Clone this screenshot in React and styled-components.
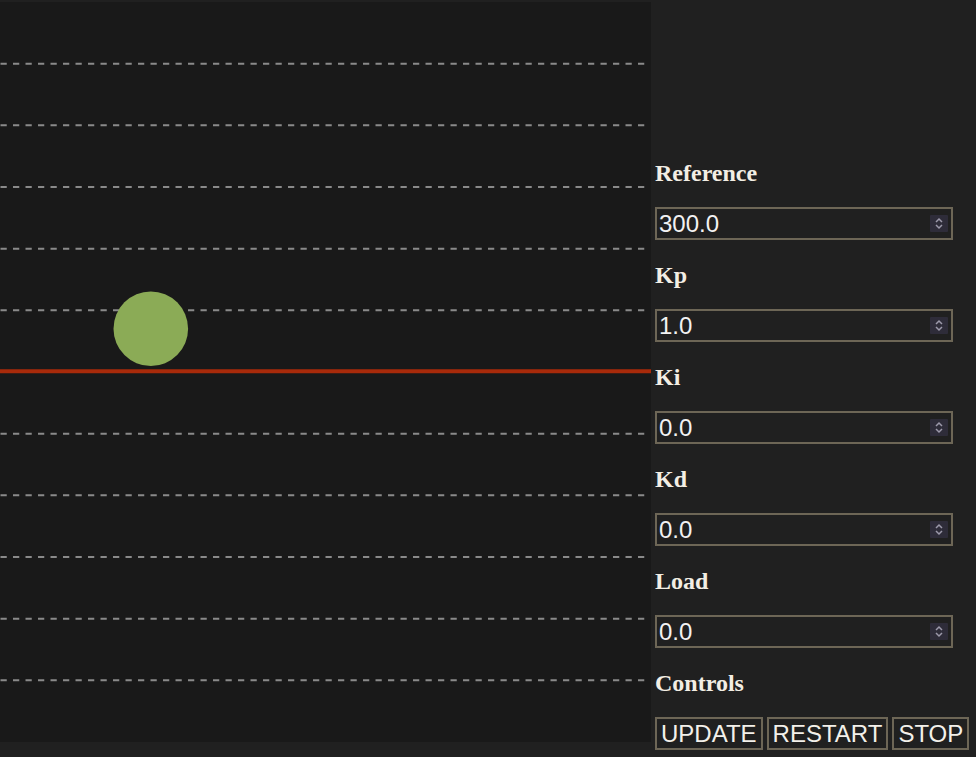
import styled, { createGlobalStyle } from "styled-components";

const Global = createGlobalStyle`
    html, body {
        margin: 0;
        background: #202020;
        overflow: hidden;
    }
`;

const Page = styled.div`
    display: flex;
    align-items: flex-start;
    gap: 4px;
    padding-top: 2px;
    height: 755px;
`;

const Board = styled.div`
    width: 651px;
    height: 740px;
    background: #191919;
    flex-shrink: 0;
    svg {
        display: block;
    }
`;

const Panel = styled.div`
    display: flex;
    flex-direction: column;
    align-items: flex-start;
    padding-top: 157px;
`;

const Label = styled.div`
    font-family: "Liberation Serif", "Times New Roman", serif;
    font-weight: bold;
    font-size: 24px;
    line-height: 28px;
    color: #f3eee4;
    margin-bottom: 20px;
`;

const Field = styled.div`
    display: flex;
    align-items: center;
    box-sizing: border-box;
    width: 298px;
    height: 33px;
    border: 2px solid #6d6656;
    margin-bottom: 21px;
    padding: 0 3px 0 2px;
    input {
        flex: 1;
        min-width: 0;
        background: transparent;
        border: none;
        outline: none;
        padding: 0;
        font-family: "Liberation Sans", Arial, sans-serif;
        font-size: 24px;
        color: #f2f2f2;
    }
`;

const Spin = styled.div`
    width: 18px;
    height: 17px;
    background: #2e2c39;
    border-radius: 1px;
    display: flex;
    align-items: center;
    justify-content: center;
`;

const Buttons = styled.div`
    display: flex;
    gap: 4px;
`;

const Button = styled.button`
    box-sizing: border-box;
    height: 33px;
    padding: 0 4px;
    background: transparent;
    border: 2px solid #6d6656;
    font-family: "Liberation Sans", Arial, sans-serif;
    font-size: 24px;
    color: #f3f0ea;
`;

function NumberField({ value }) {
    return (
        <Field>
            <input type="text" defaultValue={value} />
            <Spin>
                <svg width="10" height="13" viewBox="0 0 10 13" fill="none" stroke="#9c99aa" strokeWidth="1.5">
                    <path d="M2 5 L5 2 L8 5" />
                    <path d="M2 8 L5 11 L8 8" />
                </svg>
            </Spin>
        </Field>
    );
}

const params = [
    ["Reference", "300.0"],
    ["Kp", "1.0"],
    ["Ki", "0.0"],
    ["Kd", "0.0"],
    ["Load", "0.0"],
];

export default function App() {
    const step = 740 / 12;
    const rows = [1, 2, 3, 4, 5, 7, 8, 9, 10, 11];
    return (
        <Page>
            <Global />
            <Board>
                <svg width="651" height="740">
                    {rows.map(k => (
                        <line key={k} x1="0" x2="646" y1={k * step} y2={k * step}
                            stroke="#8a8a8a" strokeWidth="2" strokeDasharray="6.25 6.25" strokeDashoffset="-0.5" />
                    ))}
                    <line x1="0" x2="651" y1={6 * step - 0.7} y2={6 * step - 0.7} stroke="#a82a0a" strokeWidth="4" />
                    <circle cx="150.8" cy="326.7" r="37.3" fill="#8bab56" />
                </svg>
            </Board>
            <Panel>
                {params.map(([name, value]) => (
                    <div key={name}>
                        <Label>{name}</Label>
                        <NumberField value={value} />
                    </div>
                ))}
                <Label>Controls</Label>
                <Buttons>
                    <Button>UPDATE</Button>
                    <Button>RESTART</Button>
                    <Button>STOP</Button>
                </Buttons>
            </Panel>
        </Page>
    );
}
